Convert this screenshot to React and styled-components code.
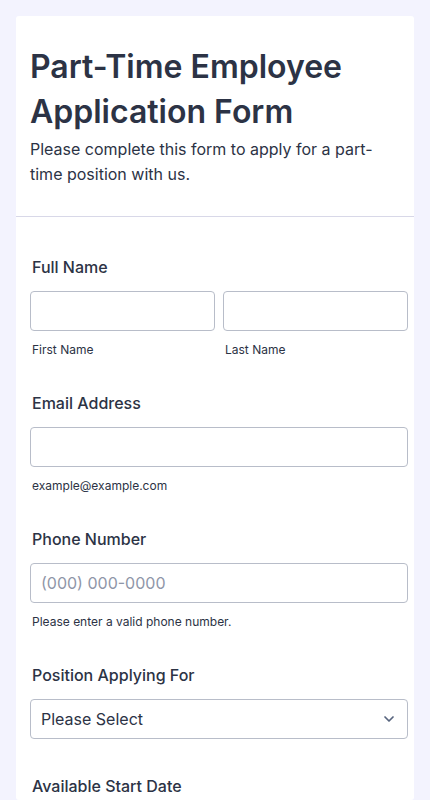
import React from 'react';
import styled, { createGlobalStyle } from 'styled-components';
import { ChevronDown } from 'lucide-react';

const GlobalStyle = createGlobalStyle`
  * { box-sizing: border-box; }
  body {
    margin: 0;
    background: #f3f3fe;
    font-family: Inter, "Noto Sans", sans-serif;
    color: #2c3345;
  }
`;

const Page = styled.div`
  padding: 16px 16px 0;
  min-height: 800px;
`;

const Card = styled.div`
  background: #fff;
  border-radius: 3px;
  min-height: 784px;
`;

const Header = styled.div`
  padding: 28px 14px 29px;
  border-bottom: 1px solid #d8d8e8;
`;

const Title = styled.h1`
  margin: 0;
  font-size: 32px;
  line-height: 45px;
  font-weight: 600;
  color: #2c3345;
`;

const Subtitle = styled.p`
  margin: 3px 0 0;
  font-size: 16px;
  line-height: 25px;
  font-weight: 400;
`;

const Fields = styled.div`
  padding: 40px 6px 0 14px;
`;

const Field = styled.div`
  margin-bottom: ${(p) => (p.$last ? 0 : p.$sub ? '35px' : '37px')};
`;

const Label = styled.div`
  padding-left: 2px;
  font-size: 16px;
  line-height: 20px;
  font-weight: 500;
  margin-bottom: 14px;
`;

const Row = styled.div`
  display: flex;
  gap: 8px;
`;

const Col = styled.div`
  flex: 1;
  min-width: 0;
`;

const Input = styled.input`
  display: block;
  width: 100%;
  height: 40px;
  border: 1px solid #b8bdc9;
  border-radius: 4px;
  padding: 0 10px;
  font-family: inherit;
  font-size: 16px;
  color: #2c3345;
  background: #fff;
  outline: none;

  &::placeholder {
    color: #8f96a8;
  }
`;

const SelectBox = styled.div`
  position: relative;
  height: 40px;
  border: 1px solid #b8bdc9;
  border-radius: 4px;
  display: flex;
  align-items: center;
  justify-content: space-between;
  padding: 0 10px 0 10px;
  font-size: 16px;
  color: #2c3345;
`;

const Sub = styled.div`
  padding-left: 2px;
  margin-top: 11px;
  font-size: 12px;
  line-height: 16px;
  color: #2c3345;
`;

export default function App() {
  return (
    <>
      <GlobalStyle />
      <Page>
        <Card>
          <Header>
            <Title>Part-Time Employee Application Form</Title>
            <Subtitle>Please complete this form to apply for a part-time position with us.</Subtitle>
          </Header>
          <Fields>
            <Field $sub>
              <Label>Full Name</Label>
              <Row>
                <Col>
                  <Input type="text" />
                  <Sub>First Name</Sub>
                </Col>
                <Col>
                  <Input type="text" />
                  <Sub>Last Name</Sub>
                </Col>
              </Row>
            </Field>
            <Field $sub>
              <Label>Email Address</Label>
              <Input type="email" />
              <Sub>example@example.com</Sub>
            </Field>
            <Field $sub>
              <Label>Phone Number</Label>
              <Input type="tel" placeholder="(000) 000-0000" />
              <Sub>Please enter a valid phone number.</Sub>
            </Field>
            <Field>
              <Label>Position Applying For</Label>
              <SelectBox>
                <span>Please Select</span>
                <ChevronDown size={16} strokeWidth={2.6} color="#57647e" />
              </SelectBox>
            </Field>
            <Field $last>
              <Label>Available Start Date</Label>
            </Field>
          </Fields>
        </Card>
      </Page>
    </>
  );
}
